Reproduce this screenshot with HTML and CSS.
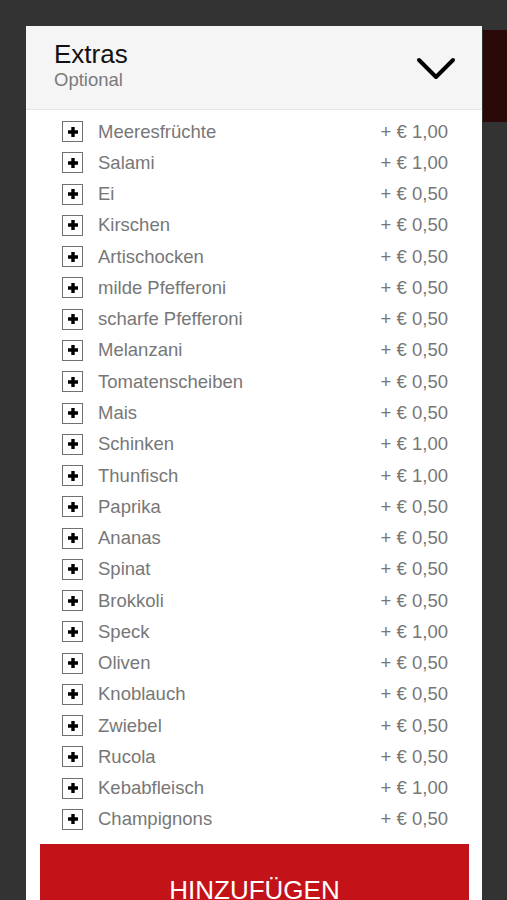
FILE: index.html
```html
<!DOCTYPE html>
<html lang="de">
<head>
  <meta charset="UTF-8">
  <meta name="viewport" content="width=device-width, initial-scale=1.0">
  <title>Extras</title>
  <link rel="stylesheet" href="styles.css">
</head>
<body>
  <!-- Page behind the dialog -->
  <div class="backdrop-strip"></div>

  <div class="modal">
    <div class="modal-header">
      <div class="titles">
        <h1>Extras</h1>
        <p class="subtitle">Optional</p>
      </div>
      <svg class="chevron" width="40" height="24" viewBox="0 0 40 24">
        <path d="M3 3 L20 20 L37 3" fill="none" stroke="#000" stroke-width="4" stroke-linecap="round" stroke-linejoin="round"/>
      </svg>
    </div>

    <!-- List of extras -->
    <ul class="extras" id="extras"></ul>

    <button type="button" class="add-button">HINZUFÜGEN</button>
  </div>

  <script>
    var extras = [
      ["Meeresfrüchte", "1,00"],
      ["Salami", "1,00"],
      ["Ei", "0,50"],
      ["Kirschen", "0,50"],
      ["Artischocken", "0,50"],
      ["milde Pfefferoni", "0,50"],
      ["scharfe Pfefferoni", "0,50"],
      ["Melanzani", "0,50"],
      ["Tomatenscheiben", "0,50"],
      ["Mais", "0,50"],
      ["Schinken", "1,00"],
      ["Thunfisch", "1,00"],
      ["Paprika", "0,50"],
      ["Ananas", "0,50"],
      ["Spinat", "0,50"],
      ["Brokkoli", "0,50"],
      ["Speck", "1,00"],
      ["Oliven", "0,50"],
      ["Knoblauch", "0,50"],
      ["Zwiebel", "0,50"],
      ["Rucola", "0,50"],
      ["Kebabfleisch", "1,00"],
      ["Champignons", "0,50"]
    ];

    var list = document.getElementById("extras");

    // Build one row per extra
    extras.forEach(function(item) {
      var li = document.createElement("li");
      li.className = "extra";
      li.innerHTML =
        '<span class="plus-box"><svg width="12" height="12" viewBox="0 0 12 12"><path d="M6 1 V11 M1 6 H11" stroke="#000" stroke-width="3.4"/></svg></span>' +
        '<span class="extra-name">' + item[0] + '</span>' +
        '<span class="extra-price">+ € ' + item[1] + '</span>';
      list.appendChild(li);
    });
  </script>
</body>
</html>
```

FILE: styles.css
```css
body {
  margin: 0;
  padding-top: 26px;
  height: 874px;
  overflow: hidden;
  background-color: #333333;
  font-family: "Liberation Sans", Arial, sans-serif;
}

/* Dark red bit of the page peeking out on the right */
.backdrop-strip {
  position: absolute;
  top: 30px;
  left: 483px;
  width: 24px;
  height: 92px;
  background-color: #2a0909;
}

.modal {
  position: relative;
  margin-left: 26px;
  width: 456px;
  background-color: #fff;
}

.modal-header {
  display: flex;
  align-items: flex-start;
  justify-content: space-between;
  padding: 13px 26px 18px 28px;
  background-color: #f5f5f5;
  border-bottom: 1px solid #e6e6e6;
}

h1 {
  margin: 0;
  font-size: 26px;
  line-height: 30px;
  font-weight: normal;
  color: #111;
}

.subtitle {
  margin: 0;
  font-size: 18.5px;
  line-height: 22px;
  color: #7a7a7a;
}

.chevron {
  display: block;
  margin-top: 18px;
}

.extras {
  list-style: none;
  margin: 0;
  padding: 6px 34px 0 36px;
}

.extra {
  display: flex;
  align-items: center;
  height: 31.27px;
  font-size: 18.5px;
  color: #777;
}

.plus-box {
  display: flex;
  align-items: center;
  justify-content: center;
  width: 19px;
  height: 19px;
  border: 1px solid #707070;
  margin-right: 15px;
}

.plus-box svg {
  display: block;
}

.extra-name {
  flex: 1;
}

.extra-price {
  color: #777;
}

.add-button {
  display: flex;
  justify-content: center;
  align-items: flex-start;
  margin: 9px 0 0 14px;
  width: 429px;
  height: 100px;
  padding: 31px 0 0;
  border: none;
  background-color: #c41219;
  color: #fff;
  font-family: "Liberation Sans", Arial, sans-serif;
  font-size: 26px;
  line-height: 30px;
}
```
